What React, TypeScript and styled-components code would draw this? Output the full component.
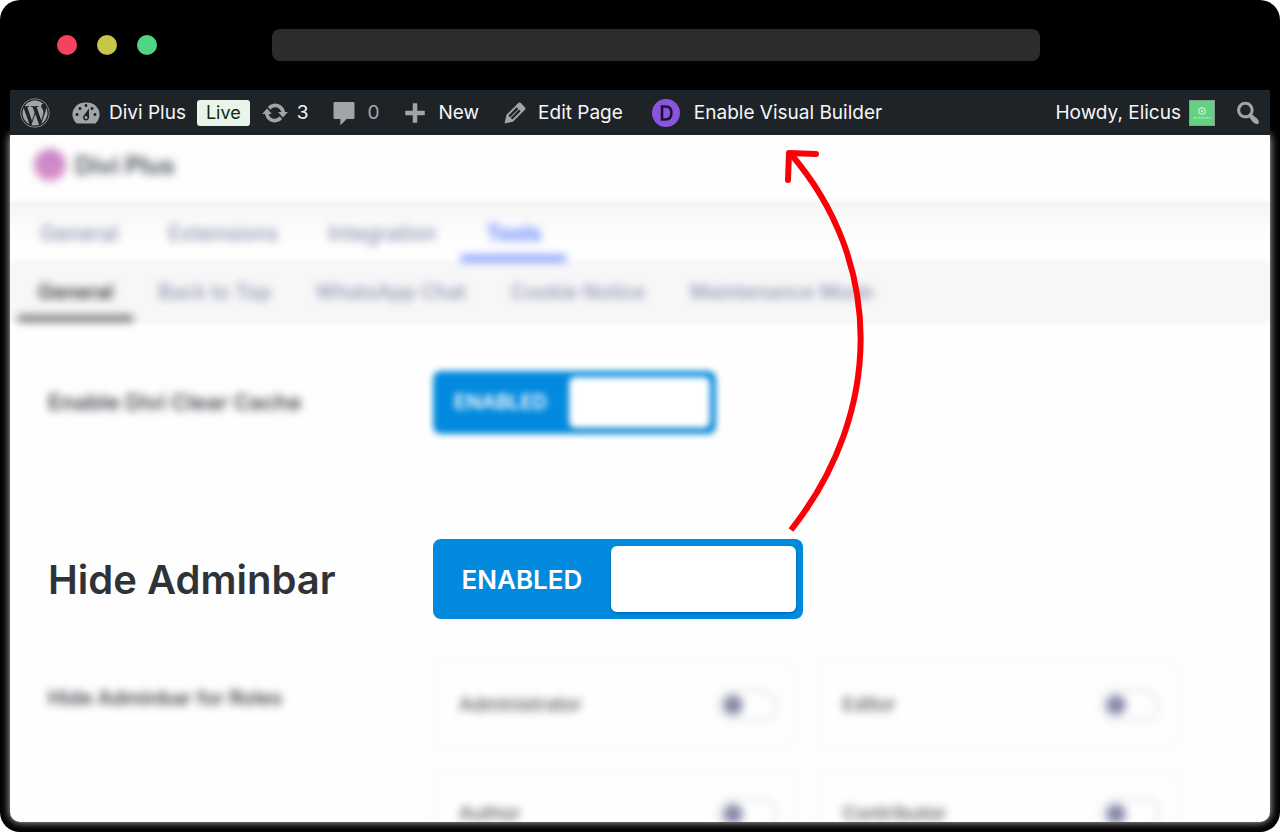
import React from "react";
import styled, { createGlobalStyle, css } from "styled-components";
import { FaWordpress } from "react-icons/fa";

const GlobalStyle = createGlobalStyle`
  *, *::before, *::after { box-sizing: border-box; }
  body {
    margin: 0;
    background: #fff;
    font-family: Inter, "Liberation Sans", sans-serif;
  }
  button, input { font: inherit; }
  a { color: inherit; text-decoration: none; }
`;

const BrowserFrame = styled.div`
  position: relative;
  display: flex;
  flex-direction: column;
  height: 100vh;
  padding: 0 10px 10px;
  border-radius: 20px;
  background: #000;
  overflow: hidden;
`;

const TitleBar = styled.header`
  display: grid;
  grid-template-columns: 262px 1fr 230px;
  align-items: center;
  flex: none;
  height: 90px;
`;

const WindowButtons = styled.div`
  display: flex;
  gap: 20px;
  padding-left: 47px;
`;

const WindowButton = styled.button<{ $color: string }>`
  width: 20px;
  height: 20px;
  padding: 0;
  border: 0;
  border-radius: 50%;
  background: ${(p) => p.$color};
`;

const AddressInput = styled.input`
  width: 100%;
  height: 32px;
  padding: 0 12px;
  border: 0;
  border-radius: 8px;
  background: #2c2c2c;
  color: #ddd;
`;

const AdminBar = styled.nav`
  position: relative;
  z-index: 1;
  display: flex;
  align-items: center;
  gap: 21px;
  flex: none;
  height: 45px;
  padding: 0 7px 0 10px;
  background: #1d2327;
  color: #f0f0f1;
  font-size: 19px;
  line-height: 24px;
  white-space: nowrap;
`;

const AdminLink = styled.a<{ $muted?: boolean }>`
  display: flex;
  align-items: center;
  gap: 8px;
  color: ${(p) => (p.$muted ? "#a7aaad" : "#f6f6f7")};
`;

const SiteGroup = styled.div`
  display: flex;
  align-items: center;
  gap: 11px;
`;

const LiveBadge = styled.span`
  padding: 1px 9px;
  border-radius: 3px;
  background: #e9f5e8;
  color: #10290f;
  font-size: 18px;
`;

const AccountGroup = styled.div`
  display: flex;
  align-items: center;
  gap: 18px;
  margin-left: auto;
`;

const SearchButton = styled.button`
  display: flex;
  padding: 0;
  border: 0;
  background: none;
`;

const Page = styled.main`
  flex: 1;
  min-height: 0;
  border-radius: 0 0 10px 10px;
  background: #fefefe;
  box-shadow: 0 0 8px rgba(255, 255, 255, 0.8);
`;

const PageClip = styled.div`
  height: 100%;
  border-radius: inherit;
  overflow: hidden;
`;

const soft = css`
  filter: blur(4px);
`;

const ProductHeader = styled.div`
  display: flex;
  align-items: center;
  gap: 9px;
  height: 67px;
  padding: 0 24px 7px;
  color: #444b52;
  font-size: 24px;
  font-weight: 600;
`;

const ProductLogo = styled.span`
  width: 32px;
  height: 32px;
  border-radius: 50%;
  background: linear-gradient(#c583c8, #dc8fc6);
  ${soft}
`;

const ProductName = styled.span`
  ${soft}
`;

const TabBar = styled.nav<{ $sub?: boolean }>`
  display: flex;
  gap: ${(p) => (p.$sub ? "5px" : "0")};
  height: 60px;
  padding-left: ${(p) => (p.$sub ? "8px" : "5px")};
  background: ${(p) =>
    p.$sub
      ? "#f7f7f8"
      : "linear-gradient(#f4f5f5, #fafafb 20px, #fefefe 40px)"};
  box-shadow: 0 0 8px ${(p) => (p.$sub ? "#f7f7f8" : "#f4f5f5")};
`;

const Tab = styled.a<{ $tone?: "blue" | "dark"; $sub?: boolean }>`
  display: flex;
  align-items: center;
  justify-content: center;
  padding: ${(p) => (p.$sub ? "6px 20px 0" : "10px 25px 0")};
  border-bottom: 7px solid transparent;
  color: #8b90ae;
  font-size: ${(p) => (p.$sub ? "20px" : "21px")};
  font-weight: 500;
  white-space: nowrap;
  ${soft}
  ${(p) =>
    p.$tone === "blue" &&
    css`
      color: #4a72ff;
      font-weight: 600;
      border-color: #7f9bff;
    `}
  ${(p) =>
    p.$tone === "dark" &&
    css`
      color: #333;
      font-weight: 600;
      border-color: #77797c;
    `}
`;

const Settings = styled.div`
  padding: 0 38px;
`;

const SettingRow = styled.section<{ $height: number; $divided?: boolean }>`
  display: grid;
  grid-template-columns: 385px 1fr;
  align-items: center;
  height: ${(p) => p.$height}px;
  padding-bottom: ${(p) => (p.$divided ? "18px" : "0")};
  border-bottom: 2px solid ${(p) => (p.$divided ? "#fbfbfb" : "transparent")};
`;

const RowLabel = styled.span<{ $focus?: boolean }>`
  color: ${(p) => (p.$focus ? "#2f3337" : "#43484e")};
  font-size: ${(p) => (p.$focus ? "40px" : "22px")};
  font-weight: 600;
  white-space: nowrap;
  ${(p) => !p.$focus && soft}
`;

const Switch = styled.button<{ $large?: boolean }>`
  display: grid;
  grid-template-columns: 12fr 13fr;
  align-items: center;
  width: ${(p) => (p.$large ? "370px" : "283px")};
  height: ${(p) => (p.$large ? "80px" : "63px")};
  padding: ${(p) => (p.$large ? "7px" : "6px")};
  border: 0;
  border-radius: 8px;
  background: #028ade;
  color: #fff;
  font-size: ${(p) => (p.$large ? "26px" : "20px")};
  font-weight: 600;
  ${(p) =>
    !p.$large &&
    css`
      filter: blur(3px);
    `}
`;

const SwitchText = styled.span`
  padding-right: 7px;
`;

const SwitchKnob = styled.span`
  height: 100%;
  border-radius: 6px;
  background: #fff;
  box-shadow: 0 1px 3px rgba(0, 40, 80, 0.4);
`;

const RolesRow = styled.section`
  display: grid;
  grid-template-columns: 385px 1fr;
  padding: 3px 54px 0 0;
`;

const RolesLabel = styled(RowLabel)`
  padding-top: 25px;
  font-size: 20px;
`;

const RoleGrid = styled.div`
  display: grid;
  grid-template-columns: 1fr 1fr;
  gap: 22px;
`;

const RoleCard = styled.label`
  display: flex;
  align-items: center;
  justify-content: space-between;
  height: 87px;
  padding: 0 16px 0 24px;
  border: 2px solid #f5f5f6;
  border-radius: 4px;
  color: #54585d;
  font-size: 19px;
  font-weight: 500;
  ${soft}
`;

const RoleSwitch = styled.input`
  appearance: none;
  width: 60px;
  height: 32px;
  margin: 0;
  padding: 4px;
  border: 2px solid #dcdde6;
  border-radius: 16px;

  &::before {
    content: "";
    display: block;
    width: 20px;
    height: 20px;
    border-radius: 50%;
    background: #878ba8;
  }
`;

const GuideArrow = styled.svg`
  position: absolute;
  top: 140px;
  left: 780px;
  pointer-events: none;
`;

const paths = {
  dashboard:
    "M3.76 17h12.48A7.998 7.998 0 0 0 10 3a8 8 0 0 0-6.24 14zM10 4c.55 0 1 .45 1 1s-.45 1-1 1-1-.45-1-1 .45-1 1-1zM6 6c.55 0 1 .45 1 1s-.45 1-1 1-1-.45-1-1 .45-1 1-1zm8 0c.55 0 1 .45 1 1s-.45 1-1 1-1-.45-1-1 .45-1 1-1zm-5.37 5.55L12 7v6c0 1.1-.9 2-2 2s-2-.9-2-2c0-.57.24-1.08.63-1.45zM4 10c.55 0 1 .45 1 1s-.45 1-1 1-1-.45-1-1 .45-1 1-1zm12 0c.55 0 1 .45 1 1s-.45 1-1 1-1-.45-1-1 .45-1 1-1zm-5 3c0-.55-.45-1-1-1s-1 .45-1 1 .45 1 1 1 1-.45 1-1z",
  update:
    "M10.2 3.28c3.53 0 6.43 2.61 6.92 6h2.08l-3.5 4-3.5-4h2.32c-.45-1.97-2.21-3.45-4.32-3.45-1.45 0-2.73.71-3.54 1.78L4.95 5.66C6.23 4.2 8.11 3.28 10.2 3.28zm-.4 13.44c-3.52 0-6.43-2.61-6.92-6H.8l3.5-4c1.17 1.33 2.33 2.67 3.5 4H5.48c.45 1.97 2.21 3.45 4.32 3.45 1.45 0 2.73-.71 3.54-1.78l1.71 1.95c-1.28 1.46-3.15 2.38-5.25 2.38z",
  comment:
    "M4 2.6h12c.6 0 1 .4 1 1V13c0 .6-.4 1-1 1h-4.2L7.6 18.2V14H4c-.6 0-1-.4-1-1V3.6c0-.6.4-1 1-1z",
  plus: "M16.5 8.5v3h-5v5h-3v-5h-5v-3h5v-5h3v5z",
  edit: "m13.89 3.39 2.71 2.72c.46.46.42 1.24.03 1.64l-8.01 8.02-5.56 1.16 1.16-5.58s7.6-7.63 7.99-8.03c.39-.39 1.22-.39 1.68.07zm-2.73 2.79-5.59 5.61 1.11 1.11 5.54-5.65zm-2.97 8.23 5.58-5.6-1.07-1.08-5.59 5.6z",
  search:
    "M12.14 4.18c1.87 1.87 2.11 4.75.72 6.89.12.1.22.21.36.31.2.16.47.36.81.59.34.24.56.39.66.47.42.31.73.57.94.78.32.32.6.65.84 1 .25.35.44.69.59 1.04.14.35.21.68.18 1-.02.32-.14.59-.36.81s-.49.34-.81.36c-.31.02-.65-.04-.99-.19-.35-.14-.7-.34-1.04-.59-.35-.24-.68-.52-1-.84-.21-.21-.47-.52-.77-.93-.1-.13-.25-.35-.47-.66-.22-.32-.4-.57-.56-.78-.16-.2-.29-.35-.44-.5-2.07 1.09-4.69.76-6.44-.98-2.14-2.15-2.14-5.64 0-7.78 2.15-2.15 5.63-2.15 7.78 0zm-1.41 6.36c1.36-1.37 1.36-3.58 0-4.95-1.37-1.37-3.59-1.37-4.95 0-1.37 1.37-1.37 3.58 0 4.95 1.36 1.37 3.58 1.37 4.95 0z",
};

function BarIcon({ name, size = 30 }: { name: keyof typeof paths; size?: number }) {
  return (
    <svg width={size} height={size} viewBox="0 0 20 20" fill="#a0a5aa" fillRule="evenodd" aria-hidden="true">
      <path d={paths[name]} />
    </svg>
  );
}

function DiviIcon() {
  return (
    <svg width="42" height="28" viewBox="0 0 42 28" aria-hidden="true">
      <circle cx="22" cy="14" r="14" fill="#8855dc" />
      <path
        d="M18 7.5h3.6c3.6 0 5.8 2.4 5.8 6.5s-2.2 6.5-5.8 6.5H18z"
        fill="none"
        stroke="#1d1433"
        strokeWidth="2.6"
      />
    </svg>
  );
}

function Avatar() {
  return (
    <svg width="26" height="26" viewBox="0 0 26 26" role="img" aria-label="Elicus">
      <rect x=".5" y=".5" width="25" height="25" fill="#64d283" stroke="#8c9a93" />
      <circle cx="13" cy="11" r="3.2" fill="none" stroke="#c4f2d0" strokeWidth="1.2" />
      <circle cx="13" cy="11" r="1.2" fill="#c4f2d0" />
      <path d="M4.5 17.8h17" stroke="#a3e8b6" strokeWidth="1.6" strokeDasharray="3 1" />
    </svg>
  );
}

const mainTabs = ["General", "Extensions", "Integration", "Tools"];
const subTabs = ["General", "Back to Top", "WhatsApp Chat", "Cookie Notice", "Maintenance Mode"];
const roles = ["Administrator", "Editor", "Author", "Contributor"];

export default function App() {
  return (
    <>
      <GlobalStyle />
      <BrowserFrame>
        <TitleBar>
          <WindowButtons>
            <WindowButton $color="#f4435f" aria-label="Close" />
            <WindowButton $color="#c6c64b" aria-label="Minimize" />
            <WindowButton $color="#50d584" aria-label="Maximize" />
          </WindowButtons>
          <AddressInput aria-label="Address" />
        </TitleBar>

        <AdminBar aria-label="Admin bar">
          <AdminLink href="#about" aria-label="About WordPress">
            <FaWordpress size={30} color="#a0a5aa" />
          </AdminLink>
          <SiteGroup>
            <AdminLink href="#site">
              <BarIcon name="dashboard" />
              Divi Plus
            </AdminLink>
            <LiveBadge>Live</LiveBadge>
            <AdminLink href="#updates">
              <BarIcon name="update" size={28} />
              3
            </AdminLink>
          </SiteGroup>
          <AdminLink href="#comments" $muted>
            <BarIcon name="comment" />
            0
          </AdminLink>
          <AdminLink href="#new">
            <BarIcon name="plus" />
            New
          </AdminLink>
          <AdminLink href="#edit">
            <BarIcon name="edit" />
            Edit Page
          </AdminLink>
          <AdminLink href="#builder">
            <DiviIcon />
            Enable Visual Builder
          </AdminLink>
          <AccountGroup>
            <AdminLink href="#account">
              Howdy, Elicus
              <Avatar />
            </AdminLink>
            <SearchButton aria-label="Search">
              <BarIcon name="search" />
            </SearchButton>
          </AccountGroup>
        </AdminBar>

        <Page>
          <PageClip>
            <ProductHeader>
              <ProductLogo />
              <ProductName>Divi Plus</ProductName>
            </ProductHeader>
            <TabBar aria-label="Sections">
              {mainTabs.map((t) => (
                <Tab key={t} href="#section" $tone={t === "Tools" ? "blue" : undefined}>
                  {t}
                </Tab>
              ))}
            </TabBar>
            <TabBar $sub aria-label="Tools">
              {subTabs.map((t) => (
                <Tab key={t} href="#tool" $sub $tone={t === "General" ? "dark" : undefined}>
                  {t}
                </Tab>
              ))}
            </TabBar>
            <Settings>
              <SettingRow $height={180} $divided>
                <RowLabel id="cache">Enable Divi Clear Cache</RowLabel>
                <Switch role="switch" aria-checked="true" aria-labelledby="cache">
                  <SwitchText>ENABLED</SwitchText>
                  <SwitchKnob />
                </Switch>
              </SettingRow>
              <SettingRow $height={156}>
                <RowLabel id="adminbar" $focus>
                  Hide Adminbar
                </RowLabel>
                <Switch $large role="switch" aria-checked="true" aria-labelledby="adminbar">
                  <SwitchText>ENABLED</SwitchText>
                  <SwitchKnob />
                </Switch>
              </SettingRow>
              <RolesRow>
                <RolesLabel>Hide Adminbar for Roles</RolesLabel>
                <RoleGrid>
                  {roles.map((r) => (
                    <RoleCard key={r}>
                      {r}
                      <RoleSwitch type="checkbox" />
                    </RoleCard>
                  ))}
                </RoleGrid>
              </RolesRow>
            </Settings>
          </PageClip>
        </Page>

        <GuideArrow width="100" height="400" viewBox="780 140 100 400" fill="none" stroke="#fb0007" strokeWidth="6" aria-hidden="true">
          <path d="M791 530C884 412 884 262 790 153" />
          <path d="M788 180L789 153L816 154" strokeLinecap="round" strokeLinejoin="round" />
        </GuideArrow>
      </BrowserFrame>
    </>
  );
}
